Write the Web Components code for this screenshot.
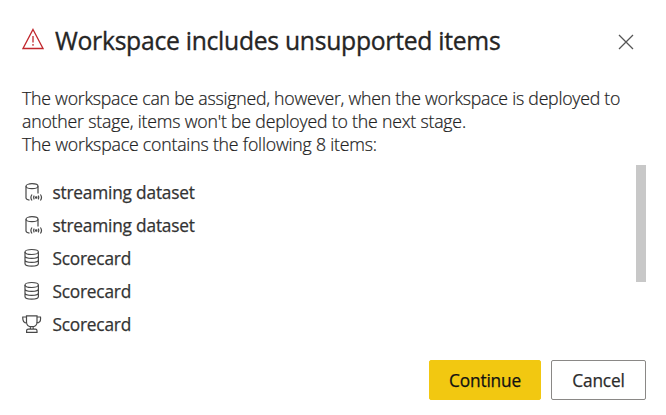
<!DOCTYPE html>
<html lang="en"><head><meta charset="utf-8"><title>Workspace includes unsupported items</title>
<style>html,body{margin:0;background:#fff;overflow:hidden}body{font-family:"Open Sans","Noto Sans",sans-serif}</style></head>
<body>
<unsupported-dialog>
<span slot="title">Workspace includes unsupported items</span>
<div slot="message">The workspace can be assigned, however, when the workspace is deployed to<br><span style="letter-spacing:-.19px">another stage, items won't be deployed to the next stage.</span><br><span style="letter-spacing:-.19px">The workspace contains the following 8 items:</span></div>
<item-row icon="stream">streaming dataset</item-row>
<item-row icon="stream">streaming dataset</item-row>
<item-row icon="database">Scorecard</item-row>
<item-row icon="database">Scorecard</item-row>
<item-row icon="trophy">Scorecard</item-row>
<action-button slot="actions" primary style="width:112px">Continue</action-button>
<action-button slot="actions" style="width:95px">Cancel</action-button>
</unsupported-dialog>
<script>
const icons={
stream:'<ellipse cx="10" cy="4.2" rx="6" ry="2.5"/><path d="M4 4.2V16Q4.2 17.7 7.5 18.2M16 4.2V11.5M10 12.5Q7.8 15.5 10 18.5M12.3 13.7Q11 15.5 12.3 17.3M18.4 12.5Q20.6 15.5 18.4 18.5M16.1 13.7Q17.4 15.5 16.1 17.3"/><circle cx="14.2" cy="15.5" r=".7" fill="#484848"/>',
database:'<ellipse cx="9.7" cy="4" rx="6.7" ry="2.5"/><path d="M3 4V15.5C3 19 16.4 19 16.4 15.5V4M3 8C3 11.2 16.4 11.2 16.4 8M3 12C3 15.2 16.4 15.2 16.4 12"/>',
trophy:'<path d="M4.5 1.8H15V8.2Q15 12.7 9.8 12.7T4.5 8.2ZM4.5 3H.8Q.3 9.2 5.2 9.2M15 3H18.5Q19.2 9.2 14.2 9.2M8.4 12.7V15.2M11.2 12.7V15.2M4.6 18.3V16.8Q4.6 15.2 6.2 15.2H13.4Q15 15.2 15 16.8V18.3Z"/>'
};
customElements.define('item-row',class extends HTMLElement{connectedCallback(){
this.attachShadow({mode:'open'}).innerHTML=`<style>:host{display:flex;height:33px;align-items:center;color:#333;font-size:17.3px;letter-spacing:-.19px;line-height:33px;-webkit-text-stroke:.25px #333}svg{width:21px;height:20px;margin:0 9.4px 2px 0;flex:none;fill:none;stroke:#484848;stroke-width:1.2}</style><svg viewBox="0 0 21 20">${icons[this.getAttribute('icon')]}</svg><span><slot></slot></span>`}});
customElements.define('action-button',class extends HTMLElement{connectedCallback(){
this.attachShadow({mode:'open'}).innerHTML=`<style>:host{display:block;height:40px}button{box-sizing:border-box;width:100%;height:100%;padding:1px 0 0;border:1px solid #8a8886;border-radius:2px;background:#fff;color:#2b2b2b;font:17.3px/38px "Open Sans",sans-serif;letter-spacing:-.18px;-webkit-text-stroke:.25px}:host([primary]) button{background:#f2c811;border-color:#f2c811;color:#111}</style><button><slot></slot></button>`}});
customElements.define('unsupported-dialog',class extends HTMLElement{connectedCallback(){
this.attachShadow({mode:'open'}).innerHTML=`<style>
:host{display:flex;flex-direction:column;box-sizing:border-box;width:666px;height:415px;padding:24px 20px 15px 22px;background:#fff}
header{display:flex;align-items:center;height:34px}
.warn{width:22px;height:22px;margin:0 11px 5px 0;fill:none;stroke:#c1272d;stroke-width:1.3}
h1{flex:1;margin:0;font-size:24.7px;letter-spacing:-.27px;line-height:34px;font-weight:400;color:#252525;-webkit-text-stroke:.35px}
.close{width:16px;height:16px;margin:2px 12px 0 0;stroke:#555;stroke-width:1.3}
.message{margin-top:29px;height:69px;font-size:17.7px;letter-spacing:-.23px;line-height:23px;font-weight:300;color:#222;-webkit-text-stroke:.22px;white-space:nowrap}
.scroll{display:flex;justify-content:space-between;margin-top:9px;height:176px}
.list{padding-top:11px}
.thumb{width:10px;height:117px;background:#c8c8c8}
footer{display:flex;justify-content:flex-end;gap:10px;margin-top:19px}
</style>
<header><svg class="warn" viewBox="0 0 22 22"><path d="M11 1.5L21 20.5H1ZM11 8V14.5M11 16V17.8"/></svg><h1><slot name="title"></slot></h1><svg class="close" viewBox="0 0 16 16"><path d="M1 1L15 15M15 1L1 15"/></svg></header>
<div class="message"><slot name="message"></slot></div>
<div class="scroll"><div class="list"><slot></slot></div><div class="thumb"></div></div>
<footer><slot name="actions"></slot></footer>`}});
</script></body></html>
